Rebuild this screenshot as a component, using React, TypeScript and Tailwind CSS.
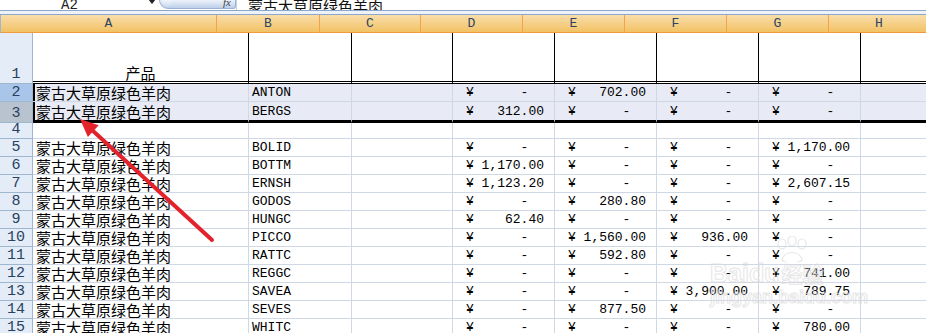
import React from 'react';

const COLS = [
  { key: 'A', w: 216 },
  { key: 'B', w: 103 },
  { key: 'C', w: 101 },
  { key: 'D', w: 102 },
  { key: 'E', w: 102 },
  { key: 'F', w: 102 },
  { key: 'G', w: 102 },
  { key: 'H', w: 100 },
];

const NAME = '蒙古大草原绿色羊肉';

type Row = { n: number; code?: string; v?: string[] };

const ROWS: Row[] = [
  { n: 2, code: 'ANTON', v: ['-', '702.00', '-', '-'] },
  { n: 3, code: 'BERGS', v: ['312.00', '-', '-', '-'] },
  { n: 4 },
  { n: 5, code: 'BOLID', v: ['-', '-', '-', '1,170.00'] },
  { n: 6, code: 'BOTTM', v: ['1,170.00', '-', '-', '-'] },
  { n: 7, code: 'ERNSH', v: ['1,123.20', '-', '-', '2,607.15'] },
  { n: 8, code: 'GODOS', v: ['-', '280.80', '-', '-'] },
  { n: 9, code: 'HUNGC', v: ['62.40', '-', '-', '-'] },
  { n: 10, code: 'PICCO', v: ['-', '1,560.00', '936.00', '-'] },
  { n: 11, code: 'RATTC', v: ['-', '592.80', '-', '-'] },
  { n: 12, code: 'REGGC', v: ['-', '-', '-', '741.00'] },
  { n: 13, code: 'SAVEA', v: ['-', '-', '3,900.00', '789.75'] },
  { n: 14, code: 'SEVES', v: ['-', '877.50', '-', '-'] },
  { n: 15, code: 'WHITC', v: ['-', '-', '-', '780.00'] },
];

const mono = "font-['Liberation_Mono',monospace]";
const cjk = "font-['Noto_Sans_CJK_SC',sans-serif]";

function Money({ value }: { value: string }) {
  return (
    <div className={`flex h-full items-end justify-between pl-[13px] pr-[10px] text-[13px] leading-[17px] text-black ${mono}`}>
      <span>¥</span>
      <span className="whitespace-pre">{value === '-' ? '-  ' : value}</span>
    </div>
  );
}

function FormulaBar() {
  return (
    <div className="flex h-[10px] overflow-hidden bg-white">
      <div className={`flex w-[145px] items-end pl-[61px] text-[14px] leading-[14px] text-[#222] ${mono}`}>
        <span className="-mb-[2px]">A2</span>
      </div>
      <div className="flex w-[14px] items-start justify-center">
        <span className="mt-[-1px] h-0 w-0 border-x-[4px] border-t-[5px] border-x-transparent border-t-[#222]" />
      </div>
      <div className="flex h-[9px] w-[77px] items-center justify-between rounded-bl-[9px] rounded-br-[3px] border border-t-0 border-[#9cb2d3] bg-gradient-to-b from-[#eef3fb] to-[#bccfe9] pl-[3px] pr-[4px]">
        <span className="-mt-[4px] h-[9px] w-[9px] rounded-full bg-gradient-to-b from-white to-[#c9d8ee]" />
        <span className="font-['Liberation_Serif',serif] text-[11px] italic leading-[9px] text-[#444] -mt-[3px]">fx</span>
      </div>
      <div className={`flex flex-1 items-end border-l border-[#c5d1e3] pl-[11px] text-[15px] leading-[15px] text-[#111] ${cjk}`}>
        <span className="-mb-[3px]">{NAME}</span>
      </div>
    </div>
  );
}

function HeaderRow() {
  return (
    <div className="flex h-[18px]">
      <div className="relative w-[33px] border-r border-b border-[#9eb6ce] bg-[#b8cdea]">
        <span className="absolute right-[3px] bottom-[3px] h-0 w-0 border-b-[9px] border-l-[9px] border-l-transparent border-b-[#eef3fa]" />
      </div>
      {COLS.map((c, i) => (
        <div
          key={c.key}
          style={{ width: c.w }}
          className={`flex shrink-0 items-center justify-center border-b border-[#f29a3c] bg-gradient-to-b from-[#f9ddaa] to-[#f2c263] text-[13px] leading-none text-[#2a4563] ${mono} ${
            i < COLS.length - 1 ? 'border-r border-r-[#f4a34a]' : ''
          }`}
        >
          {c.key}
        </div>
      ))}
    </div>
  );
}

function RowHead({ n, h, tone }: { n: number; h: string; tone?: 'sel' | 'act' }) {
  const bg = tone === 'sel' ? 'bg-[#a9c6ea]' : tone === 'act' ? 'bg-[#b9c3cf]' : 'bg-[#e4ecf7]';
  return (
    <div className={`flex w-[33px] shrink-0 items-end justify-center border-r border-b border-[#9eb6ce] ${bg} ${h} text-[15px] leading-[17px] text-[#27415f] ${mono}`}>
      {n}
    </div>
  );
}

export default function App() {
  return (
    <div className="relative h-[333px] w-[926px] overflow-hidden bg-white">
      <FormulaBar />
      <div className="h-[5px] border-y border-[#8ca7cc] bg-[#eef3fa]" />
      <HeaderRow />

      {/* row 1 */}
      <div className="flex">
        <RowHead n={1} h="h-[51px]" />
        {COLS.map((c, i) => (
          <div
            key={c.key}
            style={{ width: c.w }}
            className={`flex h-[51px] shrink-0 items-end justify-center border-b-[3px] border-double border-b-black ${
              i < COLS.length - 1 ? 'border-r border-r-black' : ''
            } text-[15px] leading-[17px] text-black ${cjk}`}
          >
            {c.key === 'A' ? '产品' : ''}
          </div>
        ))}
      </div>

      {ROWS.map((r) => {
        const sel = r.n === 2 || r.n === 3;
        const last = r.n === 3;
        const h = last ? 'h-[21px]' : r.n === 4 ? 'h-[16px]' : 'h-[18px]';
        const border = last ? 'border-b-[3px] border-b-black' : 'border-b border-b-[#d0d7e5]';
        return (
          <div key={r.n} className="flex">
            <RowHead n={r.n} h={h} tone={r.n === 2 ? 'sel' : r.n === 3 ? 'act' : undefined} />
            {COLS.map((c, i) => {
              let content: React.ReactNode = null;
              if (r.code) {
                if (c.key === 'A')
                  content = (
                    <div className={`flex h-full items-end pl-[3px] text-[15px] leading-[17px] text-black ${cjk}`}>{NAME}</div>
                  );
                else if (c.key === 'B')
                  content = (
                    <div className={`flex h-full items-end pl-[3px] text-[13px] leading-[17px] text-black ${mono}`}>{r.code}</div>
                  );
                else if (i >= 3 && i <= 6) content = <Money value={r.v![i - 3]} />;
              }
              return (
                <div
                  key={c.key}
                  style={{ width: c.w }}
                  className={`relative shrink-0 border-r border-r-[#d0d7e5] ${border} ${h} ${
                    sel ? 'bg-[#e8ebf5]' : 'bg-white'
                  } ${sel && c.key === 'A' ? 'shadow-[inset_2px_0_0_#000]' : ''}`}
                >
                  {content}
                  {last && c.key === 'A' && (
                    <span className="absolute -bottom-[5px] left-0 h-[5px] w-[5px] bg-black" />
                  )}
                </div>
              );
            })}
          </div>
        );
      })}

      {/* watermark */}
      <div className="pointer-events-none absolute left-[710px] top-[236px] select-none opacity-70">
        <svg width="40" height="26" viewBox="0 0 40 26" className="ml-[62px]">
          <g fill="none" stroke="#dedede" strokeWidth="1.2">
            <ellipse cx="10" cy="8" rx="4" ry="5" />
            <ellipse cx="20" cy="5" rx="4" ry="5" />
            <ellipse cx="30" cy="8" rx="4" ry="5" />
            <path d="M10 24 C12 14 28 14 30 24 C26 28 14 28 10 24 Z" />
          </g>
        </svg>
        <div className="flex items-end font-['Liberation_Sans',sans-serif] text-[25px] font-bold leading-[22px] text-transparent [-webkit-text-stroke:1px_#dcdcdc]">
          <span>Baidu</span>
          <span className={`${cjk} ml-[2px] text-[21px]`}>经验</span>
        </div>
        <div className="mt-[3px] font-['Liberation_Sans',sans-serif] text-[18px] font-bold leading-[20px] text-transparent [-webkit-text-stroke:1px_#dcdcdc]">
          jingyan.baidu.com
        </div>
      </div>

      {/* red arrow */}
      <svg className="pointer-events-none absolute left-0 top-0" width="926" height="333">
        <line x1="212" y1="240" x2="92" y2="130" stroke="#e3232b" strokeWidth="4" strokeLinecap="round" />
        <polygon points="80,119 87.9,137.1 98.7,125.3" fill="#e3232b" />
      </svg>
    </div>
  );
}
